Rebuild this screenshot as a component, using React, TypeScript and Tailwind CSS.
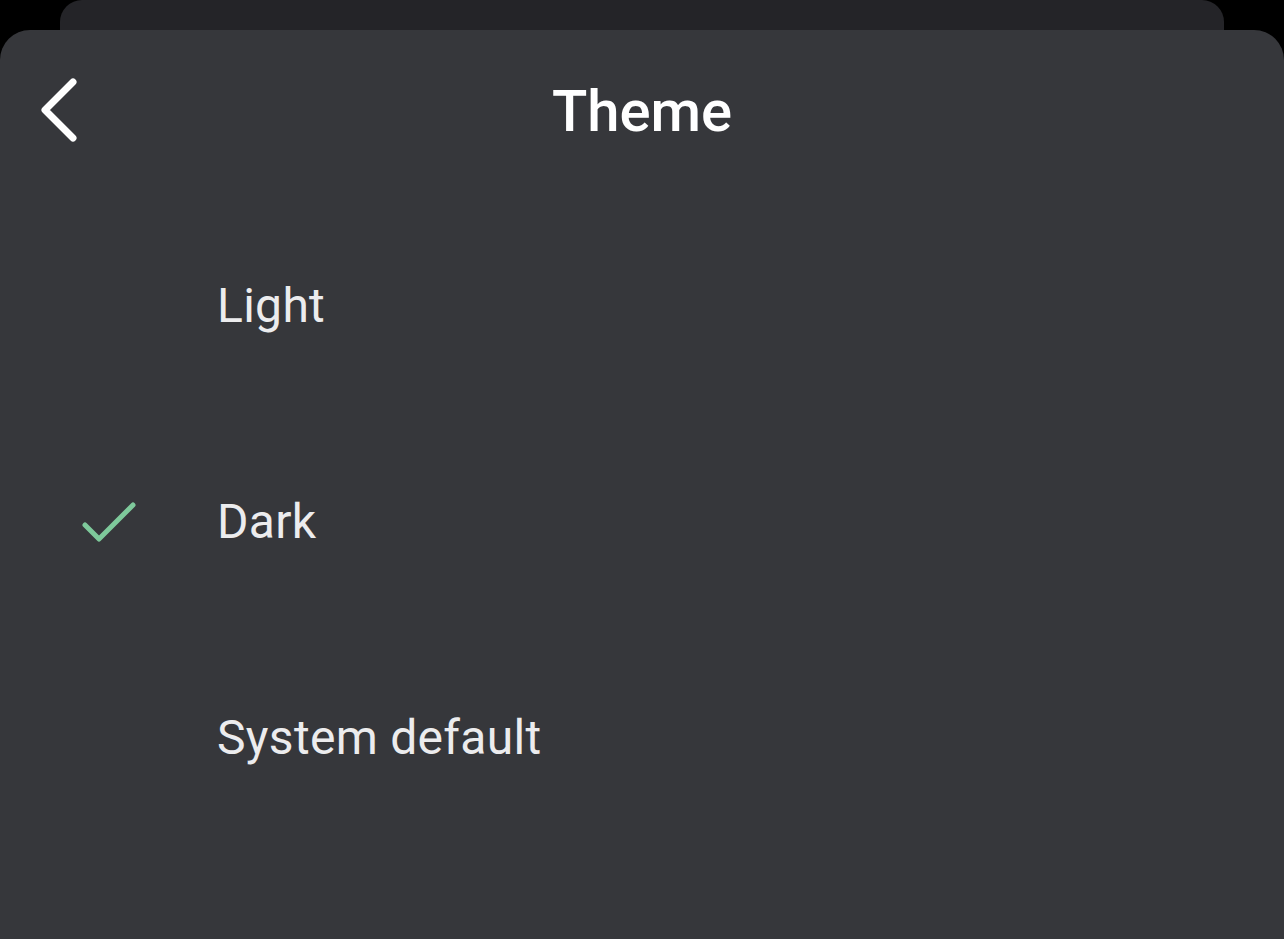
export default function App() {
  const options = ["Light", "Dark", "System default"];
  const selected = "Dark";

  return (
    <div className="relative h-[939px] w-[1284px] overflow-hidden bg-black" style={{ fontFamily: "Roboto, 'Noto Sans', sans-serif" }}>
      {/* stacked sheet behind */}
      <div className="absolute left-[60px] top-0 h-[80px] w-[1164px] rounded-t-[22px] bg-[#242428]" />

      {/* main sheet */}
      <div className="absolute left-0 top-[30px] h-[940px] w-[1284px] rounded-t-[30px] bg-[#36373b]">
        <div className="relative flex h-[168px] items-start justify-center pt-[52px]">
          <button className="absolute left-[32px] top-[44px] flex h-[72px] w-[52px] items-center justify-center">
            <svg width="48" height="72" viewBox="0 0 48 72" fill="none">
              <path d="M39 8 L11 36 L39 64" stroke="#ffffff" strokeWidth="7" strokeLinecap="round" strokeLinejoin="round" />
            </svg>
          </button>
          <h1 className="text-[58px] font-medium leading-none text-white">Theme</h1>
        </div>

        <div className="flex flex-col">
          {options.map((o) => (
            <div key={o} className="flex h-[216px] items-center">
              <div className="flex w-[218px] items-center pl-[80px]">
                {o === selected && (
                  <svg width="58" height="44" viewBox="0 0 58 44" fill="none">
                    <path d="M5 25 L19 39 L53 5" stroke="#7ec99b" strokeWidth="5" strokeLinecap="round" strokeLinejoin="round" />
                  </svg>
                )}
              </div>
              <span className="ml-[-1px] text-[48px] leading-none tracking-[0.3px] text-[#ececee]">{o}</span>
            </div>
          ))}
        </div>
      </div>
    </div>
  );
}
